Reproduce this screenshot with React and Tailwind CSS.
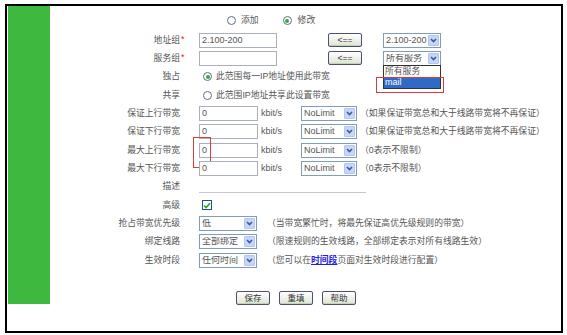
import React from "react";

const FONT = { fontFamily: '"Liberation Sans", "Noto Sans CJK SC", sans-serif' };

function Chevron() {
  return (
    <svg width="7" height="5" viewBox="0 0 7 5">
      <path d="M1 1 L3.5 3.6 L6 1" fill="none" stroke="#3b5a9a" strokeWidth="1.6" />
    </svg>
  );
}

function Select({ value, w = "w-[58px]", children }) {
  return (
    <div className={`relative flex items-center h-[15px] ${w} border border-[#7f9db9] bg-white`}>
      <span className="flex-1 pl-[2px] text-[9px] leading-none text-[#555] whitespace-nowrap overflow-hidden">{value}</span>
      <span className="flex items-center justify-center w-[11px] h-[11px] mr-[1px] rounded-[1px] bg-[#c6d6fb] border border-[#b3c6ef]">
        <Chevron />
      </span>
      {children}
    </div>
  );
}

function Radio({ checked }) {
  return (
    <span className="flex items-center justify-center w-[9px] h-[9px] rounded-full border border-[#5b6f8a] bg-white shrink-0">
      {checked && <span className="w-[4px] h-[4px] rounded-full bg-[#3aa53a]" />}
    </span>
  );
}

function Input({ value, w }) {
  return (
    <div className={`flex items-center h-[15px] ${w} border border-[#a9b0b8] bg-white pl-[2px] text-[9px] leading-none text-[#555]`}>
      {value}
    </div>
  );
}

function Btn({ children, w = "w-[34px]" }) {
  return (
    <div className={`flex items-center justify-center h-[14px] ${w} rounded-[2px] border border-[#4e4e6e] bg-gradient-to-b from-white to-[#e2e2da] shadow-[inset_0_-1px_0_#b9d8a8] text-[8.5px] leading-none text-[#333]`}>
      {children}
    </div>
  );
}

function Row({ label, star, children }) {
  return (
    <div className="flex items-center h-[18.33px]">
      <div className="w-[130px] text-right text-[8.8px] leading-none text-[#555] whitespace-nowrap">
        <span className="relative">
          {label}
          {star && <span className="absolute left-full top-0 ml-[1px] text-[#e02020]">*</span>}
        </span>
      </div>
      <div className="relative ml-[19px] flex items-center text-[8.8px] leading-none text-[#555] whitespace-nowrap">
        {children}
      </div>
    </div>
  );
}

function BwRow({ label, note, marked }) {
  return (
    <Row label={label}>
      {marked && (
        <div className="absolute left-[-6px] top-[-6px] w-[18px] h-[31px] border border-[#e03a3a]" />
      )}
      <Input value="0" w="w-[59px]" />
      <span className="ml-[3px] w-[40px] text-[9px]">kbit/s</span>
      <Select value="NoLimit" w="w-[56px]" />
      <span className="ml-[3px]">{note}</span>
    </Row>
  );
}

export default function App() {
  return (
    <div className="w-[567px] h-[335px] bg-white overflow-hidden" style={FONT}>
      <div className="ml-[5px] mt-[4px] w-[558px] h-[329px] border-2 border-black flex">
        <div className="ml-[1px] w-[42px] h-[298px] bg-[#3fb83f] shrink-0" />
        <div className="flex-1 flex flex-col pt-[4px]">
          <div className="flex items-center h-[21px] pl-[177px] text-[8.8px] leading-none text-[#555]">
            <Radio />
            <span className="ml-[5px]">添加</span>
            <span className="ml-[24px] flex items-center">
              <Radio checked />
              <span className="ml-[6px]">修改</span>
            </span>
          </div>

          <Row label="地址组" star>
            <Input value="2.100-200" w="w-[78px]" />
            <span className="ml-[51px]"><Btn>&lt;==</Btn></span>
            <span className="ml-[21px]"><Select value="2.100-200" /></span>
          </Row>
          <Row label="服务组" star>
            <Input value="" w="w-[78px]" />
            <span className="ml-[51px]"><Btn>&lt;==</Btn></span>
            <span className="ml-[21px]">
              <Select value="所有服务">
                <div className="absolute left-[-1px] top-full w-[58px] border border-[#333] bg-white text-[8.8px] leading-none z-10">
                  <div className="h-[11px] flex items-center pl-[1px] text-[#555]">所有服务</div>
                  <div className="h-[11px] flex items-center pl-[1px] bg-[#316ac5] text-white text-[9px]">mail</div>
                </div>
                <div className="absolute left-[-8px] top-[25px] w-[68px] h-[16px] border border-[#e03a3a] z-20" />
              </Select>
            </span>
          </Row>
          <Row label="独占">
            <span className="ml-[4px]"><Radio checked /></span>
            <span className="ml-[4px]">此范围每一IP地址使用此带宽</span>
          </Row>
          <Row label="共享">
            <span className="ml-[4px]"><Radio /></span>
            <span className="ml-[4px]">此范围IP地址共享此设置带宽</span>
          </Row>
          <BwRow label="保证上行带宽" note="（如果保证带宽总和大于线路带宽将不再保证）" />
          <BwRow label="保证下行带宽" note="（如果保证带宽总和大于线路带宽将不再保证）" />
          <BwRow label="最大上行带宽" note="（0表示不限制）" marked />
          <BwRow label="最大下行带宽" note="（0表示不限制）" />
          <Row label="描述">
            <div className="mt-[11px] w-[167px] h-[1px] bg-[#c8c8c8]" />
          </Row>
          <Row label="高级">
            <span className="ml-[3px] flex items-center justify-center w-[10px] h-[10px] border border-[#1c5180] bg-white">
              <svg width="8" height="7" viewBox="0 0 8 7">
                <path d="M1 3.5 L3 5.5 L7 1.2" fill="none" stroke="#21a121" strokeWidth="1.6" />
              </svg>
            </span>
          </Row>
          <Row label="抢占带宽优先级">
            <Select value="低" />
            <span className="ml-[10px]">（当带宽繁忙时，将最先保证高优先级规则的带宽）</span>
          </Row>
          <Row label="绑定线路">
            <Select value="全部绑定" />
            <span className="ml-[10px]">（限速规则的生效线路，全部绑定表示对所有线路生效）</span>
          </Row>
          <Row label="生效时段">
            <Select value="任何时间" />
            <span className="ml-[10px]">
              （您可以在<span className="text-[#2222dd] font-bold underline">时间段</span>页面对生效时段进行配置）
            </span>
          </Row>

          <div className="flex items-center gap-[9px] pl-[186px] mt-[22px]">
            <Btn>保存</Btn>
            <Btn>重填</Btn>
            <Btn>帮助</Btn>
          </div>
        </div>
      </div>
    </div>
  );
}
